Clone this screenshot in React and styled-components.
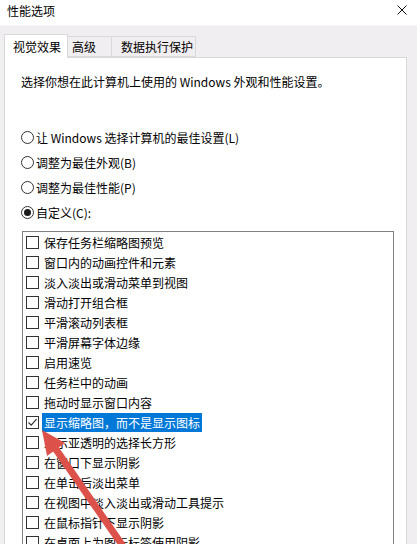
import React from "react";
import styled, { createGlobalStyle } from "styled-components";

const Global = createGlobalStyle`
  html, body { margin: 0; padding: 0; }
  body {
    background: #f1eef1;
    font-family: "Noto Sans CJK SC", "Microsoft YaHei", sans-serif;
    font-size: 12px;
    color: #000;
    overflow: hidden;
  }
`;

const Window = styled.div`
  width: 417px;
  height: 544px;
  overflow: hidden;
  position: relative;
  background: #f1eef1;
`;

const TitleBar = styled.div`
  height: 26px;
  background: #fff;
  display: flex;
  align-items: flex-start;
  justify-content: space-between;
  padding: 0 10px 0 7px;
  box-sizing: border-box;
  border-bottom: 1px solid #f7f5f7;
`;

const Title = styled.div`
  margin-top: 3px;
  line-height: 16px;
  font-size: 12px;
`;

const Close = styled.svg`
  margin-top: 5px;
  display: block;
`;

const Content = styled.div`
  padding: 8px 10px 0 4px;
`;

const TabStrip = styled.div`
  display: flex;
  align-items: flex-end;
  height: 23px;
`;

const Tab = styled.div`
  box-sizing: border-box;
  width: ${(p) => p.$w}px;
  height: ${(p) => (p.$active ? 24 : 21)}px;
  margin-bottom: ${(p) => (p.$active ? -1 : 0)}px;
  margin-left: ${(p) => (p.$first ? 0 : -1)}px;
  padding-left: ${(p) => p.$pl}px;
  display: flex;
  align-items: center;
  border: 1px solid #d9d9d9;
  border-bottom: ${(p) => (p.$active ? "none" : "1px solid #d9d9d9")};
  background: ${(p) => (p.$active ? "#fff" : "#f1eef1")};
  position: relative;
  z-index: ${(p) => (p.$active ? 2 : 1)};
  line-height: 16px;
  white-space: nowrap;
`;

const Panel = styled.div`
  background: #fff;
  border: 1px solid #d9d9d9;
  height: 520px;
  box-sizing: border-box;
  padding: 14px 0 0 16px;
`;

const Description = styled.div`
  line-height: 20px;
  white-space: nowrap;
`;

const RadioGroup = styled.div`
  margin-top: 33px;
  display: flex;
  flex-direction: column;
`;

const RadioRow = styled.div`
  height: 25px;
  display: flex;
  align-items: center;
  line-height: 25px;
`;

const RadioCircle = styled.span`
  width: 13px;
  height: 13px;
  box-sizing: border-box;
  border: 1px solid #333;
  border-radius: 50%;
  margin-right: 2px;
  display: flex;
  align-items: center;
  justify-content: center;
  background: #fff;
  &::after {
    content: "";
    width: 7px;
    height: 7px;
    border-radius: 50%;
    background: #1a1a1a;
    display: ${(p) => (p.$on ? "block" : "none")};
  }
`;

const ListBox = styled.div`
  margin-top: 6px;
  margin-left: 1px;
  width: 372px;
  height: 400px;
  box-sizing: border-box;
  border: 1px solid #828282;
  background: #fff;
`;

const Row = styled.div`
  height: 20px;
  display: flex;
  align-items: center;
  padding-left: 3px;
`;

const Box = styled.span`
  width: 13px;
  height: 13px;
  box-sizing: border-box;
  border: 1px solid #333;
  background: #fff;
  flex: none;
  display: flex;
  align-items: center;
  justify-content: center;
`;

const Label = styled.span`
  margin-left: 3px;
  padding: 0 2px;
  line-height: 19px;
  white-space: nowrap;
  background: ${(p) => (p.$sel ? "#0078d7" : "transparent")};
  color: ${(p) => (p.$sel ? "#fff" : "#000")};
`;

const Overlay = styled.svg`
  position: absolute;
  left: 0;
  top: 0;
  pointer-events: none;
`;

const items = [
  "保存任务栏缩略图预览",
  "窗口内的动画控件和元素",
  "淡入淡出或滑动菜单到视图",
  "滑动打开组合框",
  "平滑滚动列表框",
  "平滑屏幕字体边缘",
  "启用速览",
  "任务栏中的动画",
  "拖动时显示窗口内容",
  "显示缩略图，而不是显示图标",
  "显示亚透明的选择长方形",
  "在窗口下显示阴影",
  "在单击后淡出菜单",
  "在视图中淡入淡出或滑动工具提示",
  "在鼠标指针下显示阴影",
  "在桌面上为图标标签使用阴影",
];

const radios = [
  "让 Windows 选择计算机的最佳设置(L)",
  "调整为最佳外观(B)",
  "调整为最佳性能(P)",
  "自定义(C):",
];

export default function App() {
  return (
    <Window>
      <Global />
      <TitleBar>
        <Title>性能选项</Title>
        <Close width="10" height="10" viewBox="0 0 10 10">
          <path d="M0.5 0.5 L9.5 9.5 M9.5 0.5 L0.5 9.5" stroke="#111" strokeWidth="1" />
        </Close>
      </TitleBar>
      <Content>
        <TabStrip>
          <Tab $first $active $w={64} $pl={8}>视觉效果</Tab>
          <Tab $w={45} $pl={4}>高级</Tab>
          <Tab $w={85} $pl={9}>数据执行保护</Tab>
        </TabStrip>
        <Panel>
          <Description>选择你想在此计算机上使用的 Windows 外观和性能设置。</Description>
          <RadioGroup>
            {radios.map((r, i) => (
              <RadioRow key={r}>
                <RadioCircle $on={i === 3} />
                {r}
              </RadioRow>
            ))}
          </RadioGroup>
          <ListBox>
            {items.map((t, i) => (
              <Row key={t}>
                <Box>
                  {i === 9 && (
                    <svg width="11" height="11" viewBox="0 0 11 11">
                      <path d="M1.5 5.5 L4.2 8.2 L9.5 2.2" fill="none" stroke="#333" strokeWidth="1.2" />
                    </svg>
                  )}
                </Box>
                <Label $sel={i === 9}>{t}</Label>
              </Row>
            ))}
          </ListBox>
        </Panel>
      </Content>
      <Overlay width="417" height="544" viewBox="0 0 417 544">
        <line x1="55" y1="448" x2="127" y2="552" stroke="#dd514b" strokeWidth="7" />
        <polygon points="42,430 65,443 47,456" fill="#dd514b" />
      </Overlay>
    </Window>
  );
}
